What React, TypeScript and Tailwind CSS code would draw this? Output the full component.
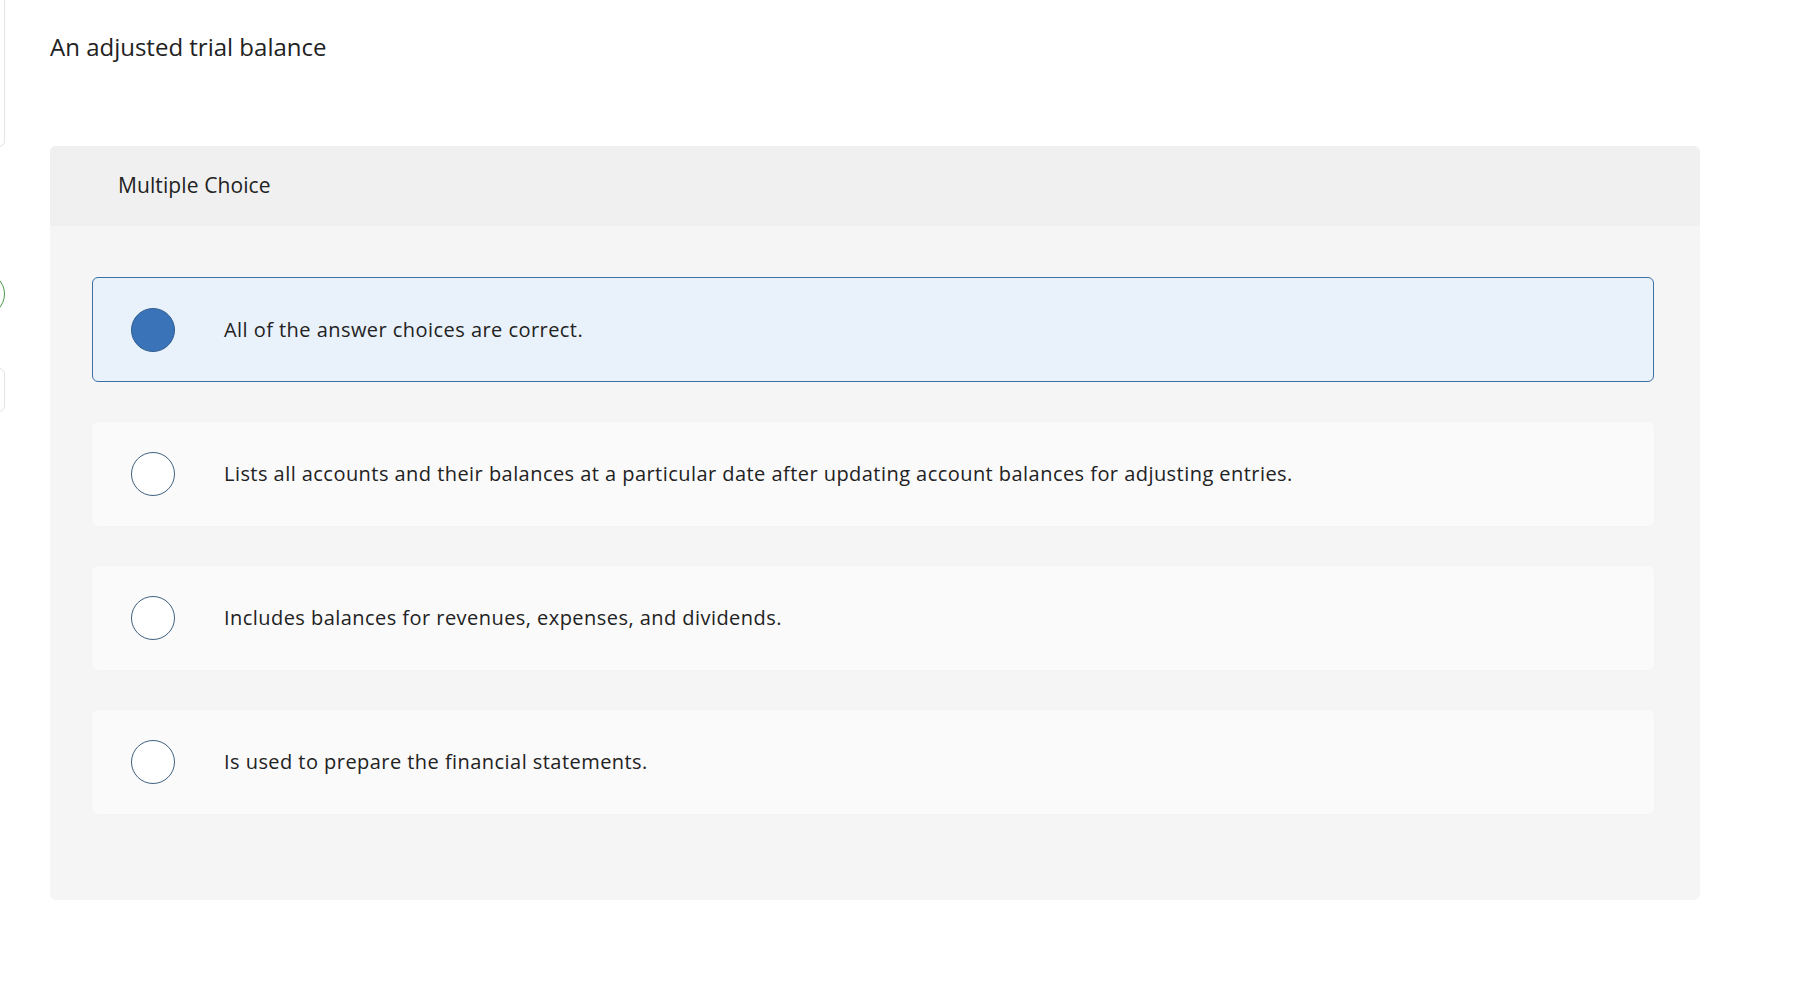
import React from 'react';

const choices = [
  'All of the answer choices are correct.',
  'Lists all accounts and their balances at a particular date after updating account balances for adjusting entries.',
  'Includes balances for revenues, expenses, and dividends.',
  'Is used to prepare the financial statements.',
];

const font = { fontFamily: '"Open Sans", "Liberation Sans", sans-serif' };

export default function App() {
  const selected = 0;
  return (
    <div className="flex min-h-screen bg-white text-[#222]" style={font}>
      {/* the sidebar is scrolled off to the left; only its edge shows */}
      <div className="flex w-[5px] shrink-0 flex-col items-end overflow-hidden">
        <div className="mt-[-10px] h-[157px] w-[24px] shrink-0 rounded-md border border-[#e4e4e4]" />
        <div className="mt-[125px] h-[44px] w-[45px] shrink-0 rounded-full border border-[#4a9a4a]" />
        <div className="mt-[52px] h-[44px] w-[25px] shrink-0 rounded-md border border-[#e4e4e4]" />
      </div>

      <div className="pl-[45px] pt-[31px]">
        <h1 className="text-[24px] leading-8 font-normal text-[#222]">An adjusted trial balance</h1>

        <div className="mt-[83px] w-[1650px] overflow-hidden rounded-md bg-[#f5f5f5]">
          <div className="flex h-[80px] items-center bg-[#f0f0f0] pl-[68px] text-[21px] tracking-[0.1px] text-[#222]">
            Multiple Choice
          </div>
          <div className="flex flex-col gap-[40px] pl-[42px] pr-[46px] pt-[51px] pb-[86px]">
            {choices.map((c, i) => {
              const on = i === selected;
              return (
                <div
                  key={i}
                  className={
                    on
                      ? 'flex h-[105px] items-center rounded-md border border-[#3d6fa5] bg-[#e9f1fa] pl-[38px]'
                      : 'flex h-[104px] items-center rounded-md bg-[#fafafa] pl-[39px] shadow-[0_0_2px_rgba(0,0,0,0.03)]'
                  }
                >
                  <span
                    className={
                      on
                        ? 'h-[44px] w-[44px] shrink-0 rounded-full border border-[#2f5f92] bg-[#3a73b8]'
                        : 'h-[44px] w-[44px] shrink-0 rounded-full border-[1.5px] border-[#40607f] bg-white'
                    }
                  />
                  <span className="ml-[49px] text-[20px] tracking-[0.45px] text-[#222]">{c}</span>
                </div>
              );
            })}
          </div>
        </div>
      </div>
    </div>
  );
}
